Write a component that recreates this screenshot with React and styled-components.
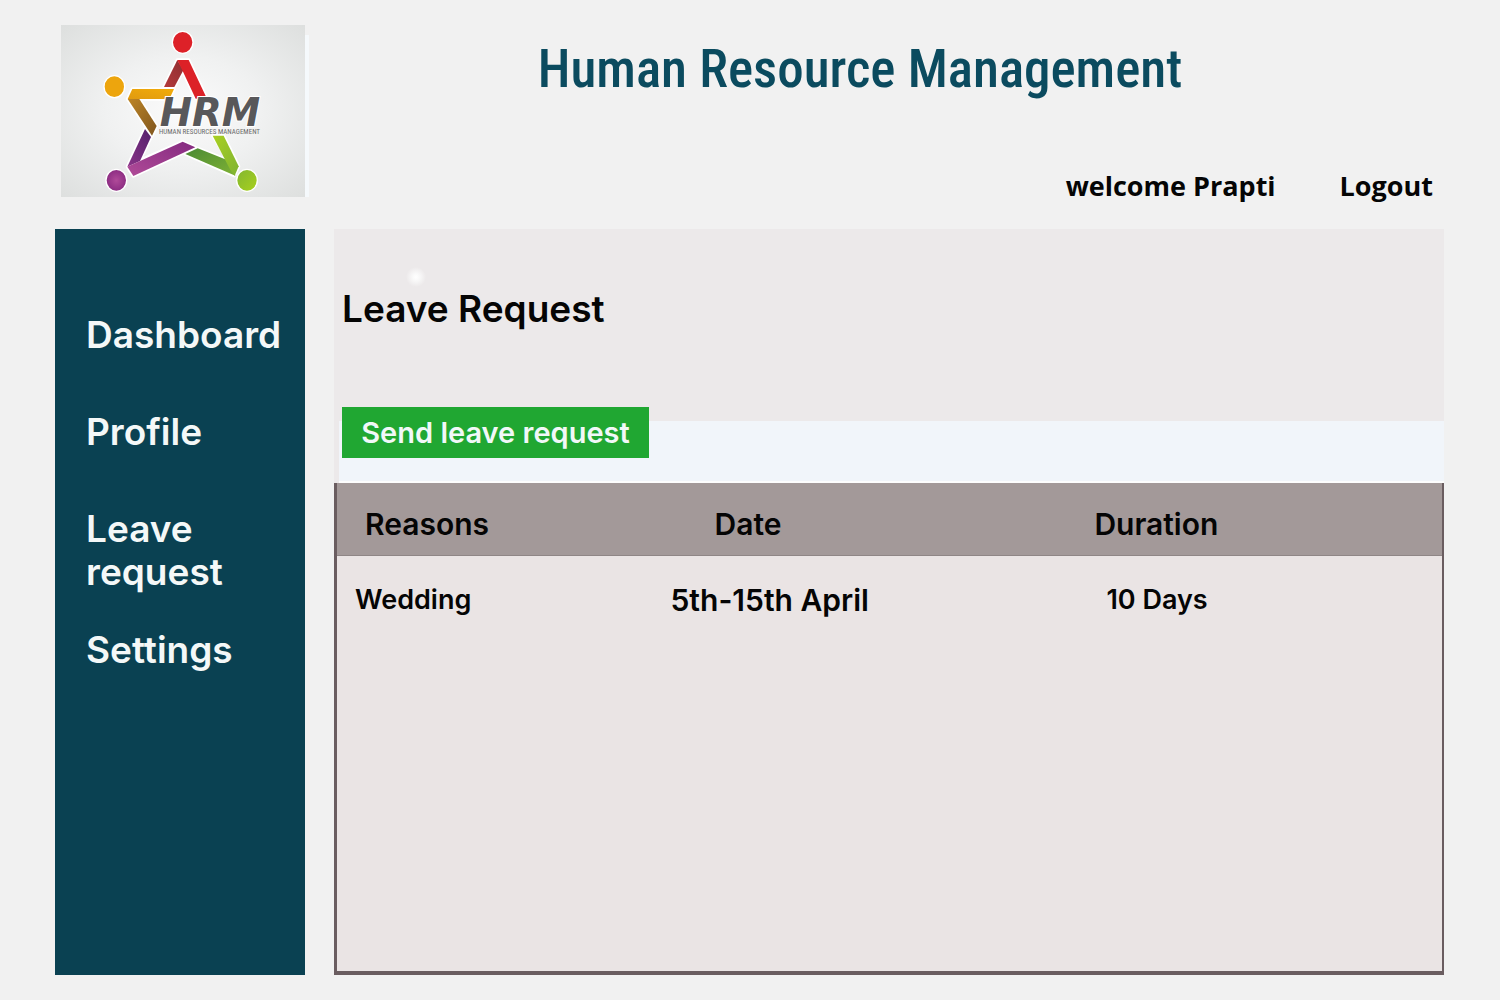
import React from "react";
import styled, { createGlobalStyle } from "styled-components";

const GlobalStyle = createGlobalStyle`
  *, *::before, *::after { box-sizing: border-box; }
  body {
    margin: 0;
    background: #f1f1f1;
    color: #050505;
    font-family: Inter, "Liberation Sans", Arial, sans-serif;
    font-weight: 600;
  }
`;

const Page = styled.div`
  min-height: 100vh;
  display: flex;
  flex-direction: column;
  padding: 25px 56px 25px 55px;
`;

const Header = styled.header`
  display: grid;
  grid-template-columns: 250px 1fr;
  column-gap: 29px;
  height: 204px;
`;

const LogoCard = styled.div`
  width: 244px;
  height: 172px;
  margin-left: 6px;
  background: radial-gradient(ellipse at center, #fbfbfb 0%, #f0f1f1 45%, #dddfde 100%);
  box-shadow: 9px 5px 0 -5px #f5f9fc;

  svg { display: block; width: 100%; height: 100%; }
`;

const HeaderBody = styled.div`
  display: flex;
  flex-direction: column;
`;

const Title = styled.h1`
  margin: 0;
  padding: 8px 58px 0 0;
  text-align: center;
  color: #0b4b5f;
  font: 500 53px/72px "Roboto Condensed", Roboto, sans-serif;
`;

const Account = styled.div`
  display: flex;
  justify-content: flex-end;
  gap: 64px;
  padding: 63px 11px 0 0;
  font: 700 27px/36px "Open Sans", "Noto Sans", sans-serif;
`;

const LogoutLink = styled.a`
  color: inherit;
  text-decoration: none;
`;

const Content = styled.div`
  flex: 1;
  display: grid;
  grid-template-columns: 250px 1fr;
  column-gap: 29px;
`;

const Sidebar = styled.nav`
  background: #0a4152;
  padding: 84px 24px 24px 31px;
`;

const NavList = styled.ul`
  margin: 0;
  padding: 0;
  list-style: none;
`;

const NavItem = styled.li`
  margin-bottom: ${(p) => (p.$tight ? 35 : 54)}px;
`;

const NavLink = styled.a`
  display: block;
  color: #f4f8f8;
  font-size: 37px;
  line-height: 43px;
  text-decoration: none;
`;

const Panel = styled.main`
  display: flex;
  flex-direction: column;
  background: #ece9ea;
`;

const Intro = styled.section`
  height: 192px;
  padding: 56px 8px 0;
  background: radial-gradient(circle at 82px 48px, #ffffff 0, #fafafa 3px, #ece9ea 10px);
`;

const PanelTitle = styled.h2`
  margin: 0;
  font-size: 37px;
  font-weight: 600;
  line-height: 48px;
`;

const Actions = styled.div`
  height: 62px;
  margin-left: 5px;
  padding-left: 3px;
  background: #f1f5fa;
  border-bottom: 2px solid #fdfdfd;
`;

const SendButton = styled.button`
  width: 307px;
  height: 51px;
  margin-top: -14px;
  padding: 0;
  border: 0;
  background: #20a732;
  color: #f1f8f8;
  font: 600 29px/36px Inter, "Liberation Sans", sans-serif;
  white-space: nowrap;
  cursor: pointer;
`;

const TableBox = styled.div`
  flex: 1;
  background: #eae4e4;
  border: solid #6a5d60;
  border-width: 0 2px 4px 3px;
`;

const Table = styled.table`
  width: 100%;
  border-collapse: collapse;
  table-layout: fixed;
`;

const HeadCell = styled.th`
  width: ${(p) => p.$width};
  height: 72px;
  padding: 10px 0 0 ${(p) => p.$inset}px;
  background: #a39999;
  border-bottom: 1px solid #8f8686;
  text-align: left;
  font-size: 30px;
  font-weight: 600;
  line-height: 36px;
`;

const Cell = styled.td`
  padding: 26px 0 0 ${(p) => p.$inset}px;
  font-size: ${(p) => (p.$large ? 30 : 27)}px;
  line-height: 36px;
`;

const columns = [
  { label: "Reasons", width: "30%", head: 28, body: 18 },
  { label: "Date", width: "38%", head: 46, body: 2, large: true },
  { label: "Duration", width: "32%", head: 6, body: 18 },
];

const requests = [["Wedding", "5th-15th April", "10 Days"]];

function Logo() {
  return (
    <svg viewBox="33 30 732 516" role="img" aria-label="HRM Human Resources Management">
      <defs>
        <linearGradient id="darkRed" x1="0" y1="1" x2="1" y2="0">
          <stop offset="0" stopColor="#b43a3c" />
          <stop offset="1" stopColor="#8f2e31" />
        </linearGradient>
        <linearGradient id="brown" x1="0" y1="0" x2="1" y2="1">
          <stop offset="0" stopColor="#bd8526" />
          <stop offset="1" stopColor="#7f551e" />
        </linearGradient>
        <linearGradient id="amber" x1="0" y1="1" x2="1" y2="0">
          <stop offset="0" stopColor="#e09a10" />
          <stop offset="1" stopColor="#f2ac0a" />
        </linearGradient>
        <linearGradient id="violet" x1="1" y1="0" x2="0" y2="1">
          <stop offset="0" stopColor="#54206c" />
          <stop offset="1" stopColor="#8a3488" />
        </linearGradient>
        <linearGradient id="purple" x1="0" y1="1" x2="1" y2="0">
          <stop offset="0" stopColor="#b04b98" />
          <stop offset="1" stopColor="#842a80" />
        </linearGradient>
        <linearGradient id="green" x1="0" y1="0" x2="1" y2="1">
          <stop offset="0" stopColor="#4a8a35" />
          <stop offset="1" stopColor="#7fb234" />
        </linearGradient>
        <linearGradient id="lime" x1="0" y1="0" x2="1" y2="1">
          <stop offset="0" stopColor="#a9d022" />
          <stop offset="1" stopColor="#7fb332" />
        </linearGradient>
        <radialGradient id="purpleDot">
          <stop offset="0" stopColor="#b04a99" />
          <stop offset="1" stopColor="#8b2c82" />
        </radialGradient>
        <linearGradient id="limeDot" x1="0" y1="0" x2="1" y2="1">
          <stop offset="0" stopColor="#82b632" />
          <stop offset="1" stopColor="#a9d11c" />
        </linearGradient>
      </defs>
      <g stroke="#ffffff" strokeWidth="10" strokeLinejoin="round" fill="#ffffff">
        <path d="M382 135H416L471 251H437L398 168L373 216H342Z" />
        <path d="M247 222H372L358 252H268L320 333L306 362L233 252Z" />
        <path d="M285 342L303 366L270 436L398 380L436 397L250 483L232 455Z" />
        <path d="M406 417L443 400L536 437L488 362H521L566 454L553 482Z" />
      </g>
      <path d="M382 135L400 166L373 216H342Z" fill="url(#darkRed)" />
      <path d="M382 135H416L471 251H437L398 168Z" fill="#dc2127" />
      <path d="M233 252H268L320 333L306 362Z" fill="url(#brown)" />
      <path d="M247 222H372L358 252H233Z" fill="url(#amber)" />
      <path d="M285 342L303 366L270 438L232 455Z" fill="url(#violet)" />
      <path d="M232 455L398 380L436 397L250 483Z" fill="url(#purple)" />
      <path d="M406 417L443 400L548 442L556 482Z" fill="url(#green)" />
      <path d="M488 362H521L566 454L554 482L540 463Z" fill="url(#lime)" />
      <g stroke="#ffffff" strokeWidth="4">
        <ellipse cx="398" cy="82" rx="31" ry="33" fill="#dd2128" />
        <ellipse cx="193" cy="215" rx="31" ry="33" fill="#eda50d" />
        <ellipse cx="199" cy="496" rx="31" ry="33" fill="url(#purpleDot)" />
        <ellipse cx="591" cy="496" rx="31" ry="33" fill="url(#limeDot)" />
      </g>
      <text
        x="329"
        y="334"
        fill="#58585a"
        stroke="#ffffff"
        strokeWidth="6"
        paintOrder="stroke"
        fontFamily="DejaVu Sans, sans-serif"
        fontStyle="italic"
        fontWeight="700"
        fontSize="116"
      >
        HRM
      </text>
      <text
        x="327"
        y="358"
        fill="#6c6c6c"
        fontFamily="Roboto Condensed, Roboto, sans-serif"
        fontWeight="400"
        fontSize="21"
      >
        HUMAN RESOURCES MANAGEMENT
      </text>
    </svg>
  );
}

export default function App() {
  return (
    <>
      <GlobalStyle />
      <Page>
        <Header>
          <LogoCard>
            <Logo />
          </LogoCard>
          <HeaderBody>
            <Title>Human Resource Management</Title>
            <Account>
              <span>welcome Prapti</span>
              <LogoutLink href="#logout">Logout</LogoutLink>
            </Account>
          </HeaderBody>
        </Header>
        <Content>
          <Sidebar aria-label="Main">
            <NavList>
              <NavItem><NavLink href="#dashboard">Dashboard</NavLink></NavItem>
              <NavItem><NavLink href="#profile">Profile</NavLink></NavItem>
              <NavItem $tight><NavLink href="#leave">Leave request</NavLink></NavItem>
              <NavItem><NavLink href="#settings">Settings</NavLink></NavItem>
            </NavList>
          </Sidebar>
          <Panel>
            <Intro>
              <PanelTitle>Leave Request</PanelTitle>
            </Intro>
            <Actions>
              <SendButton type="button">Send leave request</SendButton>
            </Actions>
            <TableBox>
              <Table>
                <thead>
                  <tr>
                    {columns.map((c) => (
                      <HeadCell key={c.label} scope="col" $width={c.width} $inset={c.head}>
                        {c.label}
                      </HeadCell>
                    ))}
                  </tr>
                </thead>
                <tbody>
                  {requests.map((row) => (
                    <tr key={row[0]}>
                      {row.map((value, i) => (
                        <Cell key={value} $inset={columns[i].body} $large={columns[i].large}>
                          {value}
                        </Cell>
                      ))}
                    </tr>
                  ))}
                </tbody>
              </Table>
            </TableBox>
          </Panel>
        </Content>
      </Page>
    </>
  );
}
